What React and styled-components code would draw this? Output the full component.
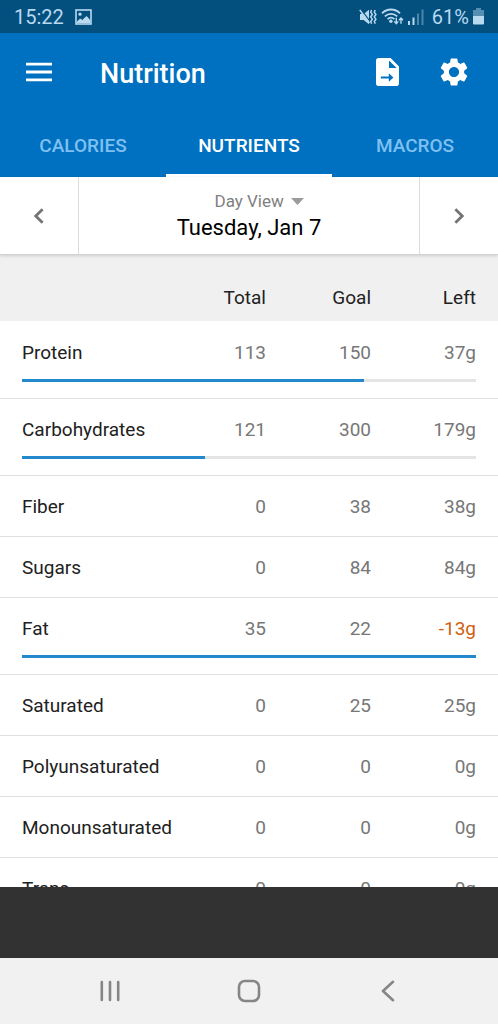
import React from 'react';
import styled, { createGlobalStyle } from 'styled-components';
import { MdSettings } from 'react-icons/md';

const nutrients = [
  { name: 'Protein', total: 113, goal: 150, left: '37g', progress: 113 / 150 },
  { name: 'Carbohydrates', total: 121, goal: 300, left: '179g', progress: 121 / 300 },
  { name: 'Fiber', total: 0, goal: 38, left: '38g' },
  { name: 'Sugars', total: 0, goal: 84, left: '84g' },
  { name: 'Fat', total: 35, goal: 22, left: '-13g', over: true, progress: 1 },
  { name: 'Saturated', total: 0, goal: 25, left: '25g' },
  { name: 'Polyunsaturated', total: 0, goal: 0, left: '0g' },
  { name: 'Monounsaturated', total: 0, goal: 0, left: '0g' },
  { name: 'Trans', total: 0, goal: 0, left: '0g' },
];

const tabs = ['Calories', 'Nutrients', 'Macros'];

const PictureIcon = () => (
  <svg width="17" height="16" viewBox="0 0 17 16">
    <rect x="1" y="1" width="15" height="14" fill="none" stroke="currentColor" strokeWidth="1.6" />
    <circle cx="5" cy="5.2" r="1.6" fill="currentColor" />
    <path d="M2 12.5l3.2-3 2 1.6L11.6 7l3.6 4v3H2z" fill="currentColor" />
  </svg>
);

const MuteIcon = () => (
  <svg width="18" height="16" viewBox="0 0 18 16">
    <path d="M1 5h3.6L10 0.8v14.4L4.6 11H1z" fill="currentColor" />
    <path d="M2.4 0.8l8.4 11.4" stroke="#03507f" strokeWidth="1.2" />
    <path d="M0.8 1l9.6 13" stroke="currentColor" strokeWidth="1.5" />
    <path
      d="M12.6 1l-0.9 2.2 1.6 2.2-1.6 2.4 1.6 2.4-1.6 2.4 0.9 2.2M16.2 1l-0.9 2.2 1.6 2.2-1.6 2.4 1.6 2.4-1.6 2.4 0.9 2.2"
      fill="none"
      stroke="currentColor"
      strokeWidth="1.5"
    />
  </svg>
);

const WifiIcon = () => (
  <svg width="23" height="17" viewBox="0 0 23 17">
    <g fill="none" stroke="currentColor" strokeWidth="1.8">
      <path d="M1 5.4C6 0.2 14 0.2 19 5.4" />
      <path d="M3.8 8.4c3.6-3.5 8.8-3.5 12.4 0" />
      <path d="M6.6 11.2c2-1.9 4.8-1.9 6.8 0" />
    </g>
    <circle cx="9.9" cy="13.2" r="1.7" fill="currentColor" />
    <path
      d="M15.3 9.8v5.4M13.3 13.4l2 2.2 2-2.2M20 15.8v-5.4M18 12.2l2-2.2 2 2.2"
      fill="none"
      stroke="currentColor"
      strokeWidth="1.4"
    />
  </svg>
);

const SignalIcon = () => (
  <svg width="16" height="16" viewBox="0 0 16 16" fill="currentColor">
    <rect x="0" y="12" width="2" height="4" />
    <rect x="4.5" y="8.5" width="2" height="7.5" />
    <rect x="9" y="4.5" width="2" height="11.5" opacity="0.4" />
    <rect x="13.5" y="0.5" width="2" height="15.5" opacity="0.4" />
  </svg>
);

const BatteryIcon = () => (
  <svg width="11" height="17" viewBox="0 0 11 17" fill="currentColor">
    <path d="M3 0h5v2h3v6H0V2h3z" opacity="0.45" />
    <path d="M0 8h11v7.5a1 1 0 0 1-1 1H1a1 1 0 0 1-1-1z" />
  </svg>
);

const MenuIcon = () => (
  <svg width="26" height="20" viewBox="0 0 26 20">
    <path d="M0 2.2h26M0 10h26M0 17.8h26" stroke="currentColor" strokeWidth="2.8" />
  </svg>
);

const ExportIcon = () => (
  <svg width="23" height="28" viewBox="0 0 23 28">
    <path
      fillRule="evenodd"
      d="M2.8 0H14.6L23 8.4V25.2A2.8 2.8 0 0 1 20.2 28H2.8A2.8 2.8 0 0 1 0 25.2V2.8A2.8 2.8 0 0 1 2.8 0zM13 2.4V10h7.6zM4.8 18.4v2.2h8v3.2l4.6-4.3-4.6-4.3v3.2z"
      fill="currentColor"
    />
  </svg>
);

const Chevron = ({ flip }) => (
  <svg width="10" height="16" viewBox="0 0 10 16">
    <path
      d={flip ? 'M1.4 1.2L8.2 8l-6.8 6.8' : 'M8.6 1.2L1.8 8l6.8 6.8'}
      fill="none"
      stroke="currentColor"
      strokeWidth="2.8"
    />
  </svg>
);

const CaretIcon = () => (
  <svg width="13" height="7" viewBox="0 0 13 7">
    <path d="M0 0h13L6.5 7z" fill="#9b9b9b" />
  </svg>
);

const App = () => {
  return (
    <>
      <GlobalStyle />
      <Screen>
        <StatusBar>
          <StatusGroup $gap={11}>
            <span>15:22</span>
            <PictureIcon />
          </StatusGroup>
          <StatusGroup $gap={4}>
            <MuteIcon />
            <WifiIcon />
            <SignalIcon />
            <BatteryText>61%</BatteryText>
            <BatteryIcon />
          </StatusGroup>
        </StatusBar>

        <Header>
          <IconButton aria-label="Menu">
            <MenuIcon />
          </IconButton>
          <Title>Nutrition</Title>
          <Actions>
            <IconButton aria-label="Export">
              <ExportIcon />
            </IconButton>
            <IconButton aria-label="Settings">
              <MdSettings size={34} />
            </IconButton>
          </Actions>
        </Header>

        <Tabs role="tablist">
          {tabs.map((tab) => (
            <Tab key={tab} role="tab" aria-selected={tab === 'Nutrients'} $active={tab === 'Nutrients'}>
              {tab}
            </Tab>
          ))}
        </Tabs>

        <DateBar>
          <ArrowButton aria-label="Previous day">
            <Chevron />
          </ArrowButton>
          <DateInfo>
            <ViewPicker>
              <ViewSelect aria-label="View" defaultValue="day">
                <option value="day">Day View</option>
              </ViewSelect>
              <CaretIcon />
            </ViewPicker>
            <DateText>Tuesday, Jan 7</DateText>
          </DateInfo>
          <ArrowButton aria-label="Next day">
            <Chevron flip />
          </ArrowButton>
        </DateBar>

        <Content>
          <Table>
            <thead>
              <tr>
                <HeadCell aria-label="Nutrient" />
                <HeadCell $narrow>Total</HeadCell>
                <HeadCell $narrow>Goal</HeadCell>
                <HeadCell $last>Left</HeadCell>
              </tr>
            </thead>
            {nutrients.map((item) => (
              <Group key={item.name}>
                <tr>
                  <NameCell scope="row">{item.name}</NameCell>
                  <ValueCell>{item.total}</ValueCell>
                  <ValueCell>{item.goal}</ValueCell>
                  <ValueCell $last $over={item.over}>
                    {item.left}
                  </ValueCell>
                </tr>
                {item.progress !== undefined && (
                  <tr>
                    <BarCell colSpan={4}>
                      <Track>
                        <Fill style={{ width: `${item.progress * 100}%` }} />
                      </Track>
                    </BarCell>
                  </tr>
                )}
              </Group>
            ))}
          </Table>
        </Content>

        <Banner />

        <NavBar>
          <NavButton aria-label="Recent apps">
            <svg width="20" height="22" viewBox="0 0 20 22">
              <path d="M1.8 2v18M10 2v18M18.2 2v18" stroke="currentColor" strokeWidth="2.6" strokeLinecap="round" />
            </svg>
          </NavButton>
          <NavButton aria-label="Home">
            <svg width="24" height="24" viewBox="0 0 24 24">
              <rect x="2" y="2" width="20" height="20" rx="6" fill="none" stroke="currentColor" strokeWidth="2.6" />
            </svg>
          </NavButton>
          <NavButton aria-label="Back">
            <svg width="14" height="22" viewBox="0 0 14 22">
              <path d="M12 1.8L2 11l10 9.2" fill="none" stroke="currentColor" strokeWidth="2.6" strokeLinecap="round" strokeLinejoin="round" />
            </svg>
          </NavButton>
        </NavBar>
      </Screen>
    </>
  );
};

export default App;

const GlobalStyle = createGlobalStyle`
  * {
    box-sizing: border-box;
  }

  body {
    margin: 0;
    font-family: Roboto, "Liberation Sans", sans-serif;
    background-color: #ffffff;
  }

  button, select {
    margin: 0;
    padding: 0;
    border: none;
    background: none;
    color: inherit;
    font: inherit;
    cursor: pointer;
  }

  svg {
    display: block;
    flex-shrink: 0;
  }
`;

const Screen = styled.div`
  height: 100vh;
  display: flex;
  flex-direction: column;
  overflow: hidden;
`;

const StatusBar = styled.div`
  flex: none;
  height: 33px;
  padding: 0 14px;
  display: flex;
  align-items: center;
  justify-content: space-between;
  background-color: #03507f;
  color: #b8d9ef;
  font-size: 20px;
`;

const StatusGroup = styled.div`
  display: flex;
  align-items: center;
  gap: ${(props) => props.$gap}px;
`;

const BatteryText = styled.span`
  margin-left: 4px;
`;

const Header = styled.header`
  flex: none;
  height: 78px;
  padding: 0 27px 0 26px;
  display: flex;
  align-items: center;
  background-color: #0070c0;
  color: #ffffff;
`;

const IconButton = styled.button`
  display: flex;
  align-items: center;
  justify-content: center;
`;

const Title = styled.h1`
  margin: 0 0 0 48px;
  padding-top: 3px;
  font-size: 27px;
  line-height: 32px;
  font-weight: 500;
`;

const Actions = styled.div`
  margin-left: auto;
  display: flex;
  align-items: center;
  gap: 38px;
`;

const Tabs = styled.div`
  flex: none;
  height: 66px;
  display: grid;
  grid-template-columns: repeat(3, 1fr);
  background-color: #0070c0;
`;

const Tab = styled.button`
  && {
    padding-top: 5px;
    border-bottom: 3px solid ${(props) => (props.$active ? '#ffffff' : 'transparent')};
    color: ${(props) => (props.$active ? '#ffffff' : '#7fc0f2')};
    font-size: 19px;
    font-weight: 500;
    text-transform: uppercase;
  }
`;

const DateBar = styled.div`
  flex: none;
  height: 78px;
  display: flex;
  background-color: #ffffff;
  border-bottom: 1px solid #d2d2d2;
  box-shadow: 0 1px 3px rgba(0, 0, 0, 0.14);
  z-index: 1;
`;

const ArrowButton = styled.button`
  width: 78px;
  display: flex;
  align-items: center;
  justify-content: center;

  && {
    color: #757575;
  }
`;

const DateInfo = styled.div`
  flex: 1;
  display: flex;
  flex-direction: column;
  align-items: center;
  justify-content: center;
  border-left: 1px solid #dcdcdc;
  border-right: 1px solid #dcdcdc;
`;

const ViewPicker = styled.label`
  display: flex;
  align-items: center;
  gap: 6px;
  padding-left: 20px;
`;

const ViewSelect = styled.select`
  && {
    appearance: none;
    color: #808080;
    font-size: 17px;
    line-height: 24px;
  }
`;

const DateText = styled.div`
  font-size: 22px;
  line-height: 28px;
  padding-top: 1px;
  color: #000000;
`;

const Content = styled.main`
  flex: 1;
  min-height: 0;
  overflow: hidden;
  background-color: #ffffff;
`;

const Table = styled.table`
  width: 100%;
  border-collapse: separate;
  border-spacing: 0;
  table-layout: fixed;
  font-size: 19px;
  line-height: 22px;
`;

const HeadCell = styled.th`
  width: ${(props) => (props.$last ? '127px' : props.$narrow ? '105px' : 'auto')};
  height: 67px;
  padding: 20px ${(props) => (props.$last ? '22px' : '0')} 0 0;
  background-color: #f0f0f0;
  border-bottom: 1px solid #ffffff;
  color: #212121;
  font-weight: 400;
  text-align: right;
`;

const Group = styled.tbody`
  > tr:last-child > * {
    border-bottom: 1px solid #e0e0e0;
  }
`;

const NameCell = styled.th`
  padding: 20px 0 18px 22px;
  color: #212121;
  font-weight: 400;
  text-align: left;
  white-space: nowrap;
`;

const ValueCell = styled.td`
  padding: 20px ${(props) => (props.$last ? '22px' : '0')} 18px 0;
  color: ${(props) => (props.$over ? '#d06010' : '#777777')};
  text-align: right;
`;

const BarCell = styled.td`
  padding: 0 22px 16px;
`;

const Track = styled.div`
  height: 3px;
  margin-top: -3px;
  background-color: #e4e4e4;
`;

const Fill = styled.div`
  height: 100%;
  background-color: #2488cc;
`;

const Banner = styled.div`
  flex: none;
  height: 71px;
  background-color: #323232;
`;

const NavBar = styled.nav`
  flex: none;
  height: 66px;
  padding: 0 8%;
  display: grid;
  grid-template-columns: repeat(3, 1fr);
  background-color: #f1f1f1;
  color: #868686;
`;

const NavButton = styled.button`
  display: flex;
  align-items: center;
  justify-content: center;
`;
